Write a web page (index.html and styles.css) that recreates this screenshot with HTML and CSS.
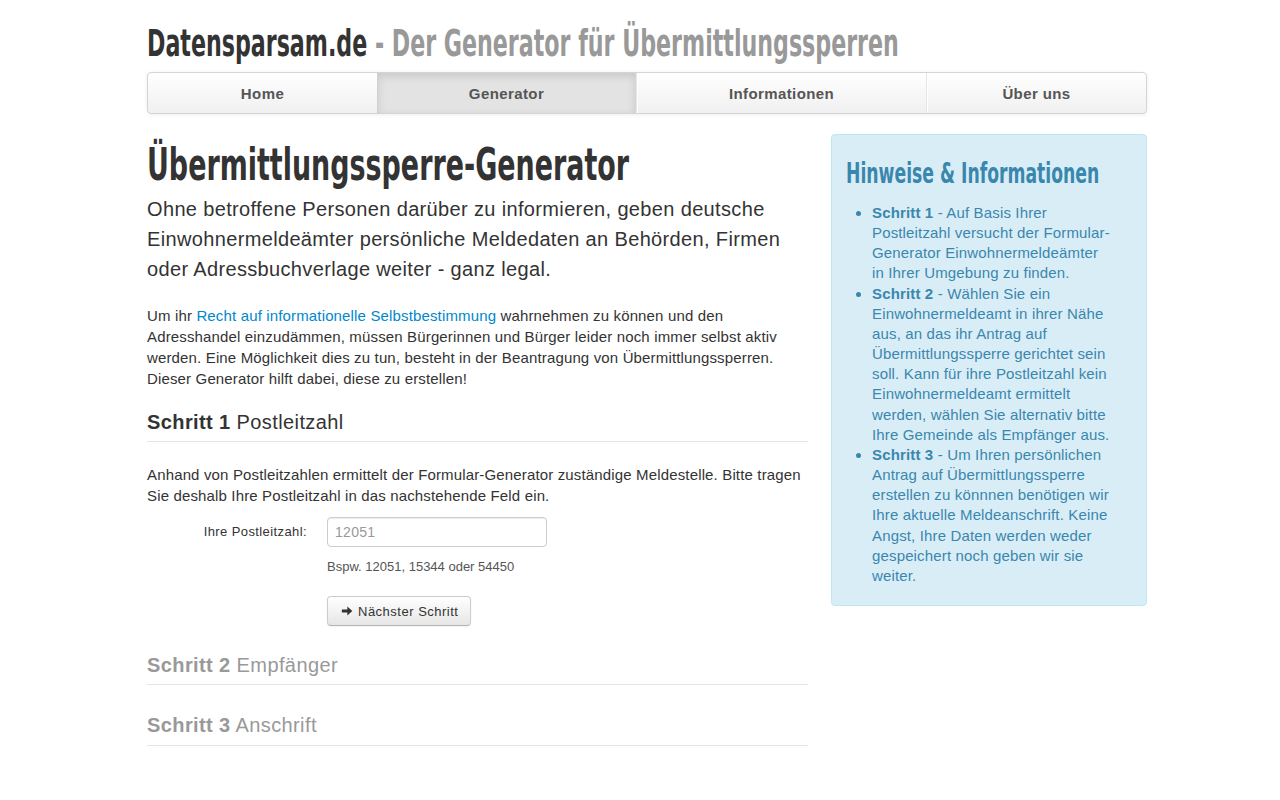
FILE: index.html
```html
<!DOCTYPE html>
<html lang="de">
<head>
<meta charset="utf-8">
<title>Datensparsam.de - Übermittlungssperre-Generator</title>
<link rel="stylesheet" href="styles.css">
</head>
<body>
<div class="container">
  <header class="masthead">
    <h3 class="brand">Datensparsam.de <span class="muted">- Der Generator für Übermittlungssperren</span></h3>
    <nav class="navbar">
      <a href="#" class="nav-item">Home</a>
      <a href="#" class="nav-item active">Generator</a>
      <a href="#" class="nav-item">Informationen</a>
      <a href="#" class="nav-item">Über uns</a>
    </nav>
  </header>

  <div class="row">
    <main class="main">
      <h1 class="title">Übermittlungssperre-Generator</h1>
      <p class="lead">Ohne betroffene Personen darüber zu informieren, geben deutsche Einwohnermeldeämter persönliche Meldedaten an Behörden, Firmen oder Adressbuchverlage weiter - ganz legal.</p>
      <p class="text">Um ihr <a href="#" class="link">Recht auf informationelle Selbstbestimmung</a> wahrnehmen zu können und den Adresshandel einzudämmen, müssen Bürgerinnen und Bürger leider noch immer selbst aktiv werden. Eine Möglichkeit dies zu tun, besteht in der Beantragung von Übermittlungssperren. Dieser Generator hilft dabei, diese zu erstellen!</p>

      <h2 class="step"><b>Schritt 1</b> Postleitzahl</h2>
      <p class="text intro">Anhand von Postleitzahlen ermittelt der Formular-Generator zuständige Meldestelle. Bitte tragen Sie deshalb Ihre Postleitzahl in das nachstehende Feld ein.</p>
      <form class="form">
        <div class="form-row">
          <label class="label" for="plz">Ihre Postleitzahl:</label>
          <div class="controls">
            <input id="plz" class="input" type="text" placeholder="12051">
            <span class="help">Bspw. 12051, 15344 oder 54450</span>
          </div>
        </div>
        <div class="form-row">
          <span class="label"></span>
          <div class="controls">
            <button type="button" class="btn"><svg class="icon" viewBox="0 0 14 14" width="12" height="12"><path d="M1 5.2h6.4V1.8l5.8 5.2-5.8 5.2V8.8H1z" fill="#333"/></svg>Nächster Schritt</button>
          </div>
        </div>
      </form>

      <h2 class="step disabled"><b>Schritt 2</b> Empfänger</h2>
      <h2 class="step disabled"><b>Schritt 3</b> Anschrift</h2>
    </main>

    <aside class="sidebar">
      <h3 class="side-title">Hinweise &amp; Informationen</h3>
      <ul class="side-list">
        <li><b>Schritt 1</b> - Auf Basis Ihrer Postleitzahl versucht der Formular-Generator Einwohnermeldeämter in Ihrer Umgebung zu finden.</li>
        <li><b>Schritt 2</b> - Wählen Sie ein Einwohnermeldeamt in ihrer Nähe aus, an das ihr Antrag auf Übermittlungssperre gerichtet sein soll. Kann für ihre Postleitzahl kein Einwohnermeldeamt ermittelt werden, wählen Sie alternativ bitte Ihre Gemeinde als Empfänger aus.</li>
        <li><b>Schritt 3</b> - Um Ihren persönlichen Antrag auf Übermittlungssperre erstellen zu könnnen benötigen wir Ihre aktuelle Meldeanschrift. Keine Angst, Ihre Daten werden weder gespeichert noch geben wir sie weiter.</li>
      </ul>
    </aside>
  </div>
</div>
</body>
</html>
```

FILE: styles.css
```css
* { box-sizing: border-box; }
html { background: #fff; }
body {
  margin: 0;
  padding: 0 0 0 14px;
  font-family: "Liberation Sans", Arial, sans-serif;
  font-size: 15px;
  line-height: 21px;
  letter-spacing: 0.15px;
  color: #333;
}
.container {
  width: 1000px;
  margin: 0 auto;
}
.masthead { padding-top: 21px; }
.brand, .title, .side-title {
  font-family: "DejaVu Sans Condensed", "DejaVu Sans", sans-serif;
  font-weight: bold;
  margin: 0;
  display: inline-block;
  white-space: nowrap;
  transform-origin: 0 50%;
  letter-spacing: 0;
}
.brand {
  font-size: 38px;
  line-height: 44px;
  color: #333;
  transform: scaleX(0.648);
}
.brand .muted { color: #999; }
.navbar {
  margin-top: 7px;
  display: grid;
  grid-template-columns: 229px 259px 290px 1fr;
  height: 42px;
  border: 1px solid #d4d4d4;
  border-radius: 4px;
  background: linear-gradient(#ffffff, #f0f0f0);
  box-shadow: 0 1px 4px rgba(0,0,0,0.065);
  overflow: hidden;
}
.nav-item {
  display: flex;
  align-items: center;
  justify-content: center;
  font-weight: bold;
  font-size: 15px;
  letter-spacing: 0.4px;
  color: #555;
  text-decoration: none;
  border-left: 1px solid #e5e5e5;
  box-shadow: inset 1px 0 0 #fff;
}
.nav-item:first-child { border-left: 0; box-shadow: none; }
.nav-item.active {
  background: #e3e3e3;
  color: #555;
  box-shadow: inset 0 3px 8px rgba(0,0,0,0.12);
  border-left: 1px solid #d0d0d0;
  border-right: 1px solid #d6d6d6;
}
.row {
  display: flex;
  gap: 23px;
  margin-top: 20px;
  align-items: flex-start;
}
.main { width: 661px; flex: none; }
.title {
  font-size: 45px;
  line-height: 52px;
  color: #333;
  margin-top: 5px;
  margin-bottom: 3px;
  transform: scaleX(0.665);
}
.lead {
  font-size: 20px;
  line-height: 30px;
  letter-spacing: 0.35px;
  margin: 0 0 21px;
}
.text { margin: 0 0 10px; }
.text.intro { margin-bottom: 11px; }
.link { color: #0088cc; text-decoration: none; }
.step {
  font-size: 20px;
  font-weight: normal;
  line-height: 28px;
  letter-spacing: 0.4px;
  margin: 0 0 22px;
  padding: 9px 0 5px;
  border-bottom: 1px solid #e5e5e5;
}
.step b { font-weight: bold; }
.step.disabled { color: #999; margin: 16px 0 0; }
.step.disabled + .step.disabled { margin-top: 17px; padding-bottom: 6px; }
.form { margin: 0; }
.form-row { display: flex; gap: 20px; margin-bottom: 19px; }
.form-row:last-child { margin-bottom: 0; }
.label {
  width: 160px;
  text-align: right;
  font-size: 13px;
  letter-spacing: 0.4px;
  line-height: 20px;
  padding-top: 5px;
  color: #333;
}
.controls { display: flex; flex-direction: column; align-items: flex-start; }
.input {
  width: 220px;
  height: 30px;
  padding: 4px 7px;
  font-family: "Liberation Sans", Arial, sans-serif;
  font-size: 14px;
  letter-spacing: 0.3px;
  color: #555;
  border: 1px solid #ccc;
  border-radius: 4px;
  box-shadow: inset 0 1px 1px rgba(0,0,0,0.075);
}
.input::placeholder { color: #999; }
.help {
  display: block;
  margin-top: 9px;
  font-size: 13px;
  letter-spacing: 0;
  color: #555;
}
.btn {
  display: inline-flex;
  align-items: center;
  gap: 5px;
  height: 30px;
  width: 144px;
  padding: 0 0 0 13px;
  font-family: "Liberation Sans", Arial, sans-serif;
  font-size: 13px;
  letter-spacing: 0.5px;
  color: #333;
  background: linear-gradient(#ffffff, #e6e6e6);
  border: 1px solid #ccc;
  border-bottom-color: #b3b3b3;
  border-radius: 4px;
  box-shadow: inset 0 1px 0 rgba(255,255,255,0.2), 0 1px 2px rgba(0,0,0,0.05);
}
.icon { flex: none; }
.sidebar {
  width: 316px;
  flex: none;
  background: #d9edf7;
  border: 1px solid #bce8f1;
  border-radius: 4px;
  padding: 20px 32px 19px 14px;
  color: #3a87ad;
}
.side-title {
  font-size: 29px;
  line-height: 36px;
  color: #3a87ad;
  margin-bottom: 12px;
  transform: scaleX(0.66);
}
.side-list {
  margin: 0;
  padding-left: 26px;
  line-height: 20.15px;
}
.side-list b { font-weight: bold; }
```
